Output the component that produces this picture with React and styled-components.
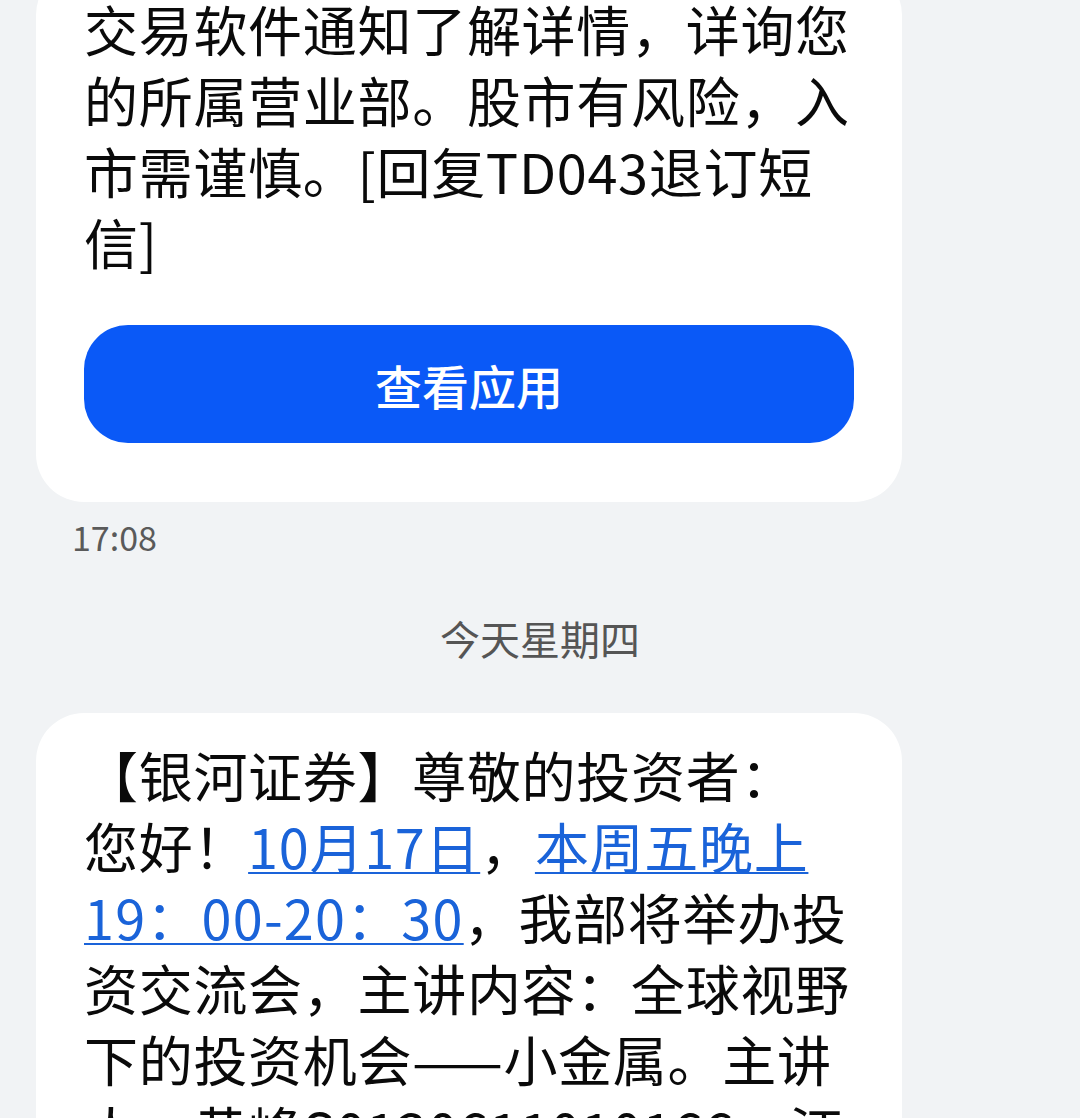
import React from 'react';
import styled, { createGlobalStyle } from 'styled-components';

const GlobalStyle = createGlobalStyle`
  html, body {
    margin: 0;
    padding: 0;
    background: #f1f3f5;
    overflow: hidden;
  }
  body {
    font-family: "Noto Sans CJK SC", "Noto Sans", sans-serif;
    -webkit-font-smoothing: antialiased;
  }
`;

const Thread = styled.div`
  display: flex;
  flex-direction: column;
  align-items: flex-start;
  padding: 0 36px;
  margin-top: -33px;
`;

const Bubble = styled.div`
  box-sizing: border-box;
  width: 866px;
  background: #ffffff;
  border-radius: 48px;
  padding: 26px 44px ${(p) => (p.$hasAction ? '59px' : '40px')} 48px;
  display: flex;
  flex-direction: column;
  gap: 48px;
`;

const MessageText = styled.div`
  font-size: 54px;
  line-height: 71px;
  letter-spacing: 0.7px;
  color: #0a0a0a;
  line-break: strict;
`;

const Link = styled.span`
  color: #1a63d9;
  letter-spacing: ${(p) => p.$spread || '0.7px'};
  text-decoration: underline;
  text-decoration-thickness: 2px;
  text-underline-offset: 3px;
`;

const ActionButton = styled.button`
  height: 118px;
  margin-right: 4px;
  border: none;
  border-radius: 44px;
  background: #0a59f7;
  color: #ffffff;
  font-family: inherit;
  font-size: 47px;
  font-weight: 500;
  cursor: pointer;
`;

const Time = styled.div`
  margin: 15px 0 0 36px;
  font-size: 34px;
  line-height: 40px;
  color: #5a5a5a;
`;

const DateDivider = styled.div`
  align-self: stretch;
  margin: 57px -36px 51px;
  text-align: center;
  font-size: 40px;
  line-height: 48px;
  color: #555555;
`;

export default function App() {
  return (
    <>
      <GlobalStyle />
      <Thread>
        <Bubble $hasAction>
          <MessageText>
            交易软件通知了解详情，详询您的所属营业部。股市有风险，入市需谨慎。[回复TD043退订短信]
          </MessageText>
          <ActionButton type="button">查看应用</ActionButton>
        </Bubble>
        <Time>17:08</Time>
        <DateDivider>今天星期四</DateDivider>
        <Bubble>
          <MessageText>
            【银河证券】尊敬的投资者：
            <br />
            您好！<Link>10月17日</Link>，<Link>本周五晚上</Link>
            <br />
            <Link $spread="1.2px">19：00-20：30</Link>，我部将举办投资交流会，主讲内容：全球视野下的投资机会——小金属。主讲人：黄峰S0130611010166，汪
          </MessageText>
        </Bubble>
      </Thread>
    </>
  );
}
